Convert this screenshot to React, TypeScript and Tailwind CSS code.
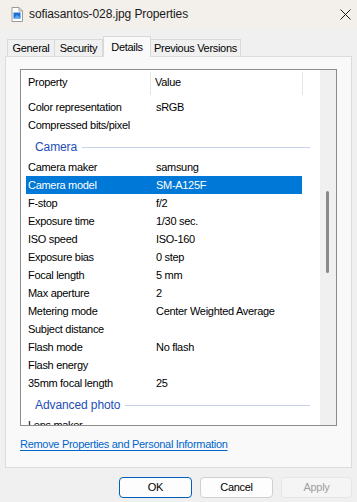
import React from "react";

type Row = { prop?: string; value?: string; group?: string; selected?: boolean };

const rows: Row[] = [
  { prop: "Color representation", value: "sRGB" },
  { prop: "Compressed bits/pixel", value: "" },
  { group: "Camera" },
  { prop: "Camera maker", value: "samsung" },
  { prop: "Camera model", value: "SM-A125F", selected: true },
  { prop: "F-stop", value: "f/2" },
  { prop: "Exposure time", value: "1/30 sec." },
  { prop: "ISO speed", value: "ISO-160" },
  { prop: "Exposure bias", value: "0 step" },
  { prop: "Focal length", value: "5 mm" },
  { prop: "Max aperture", value: "2" },
  { prop: "Metering mode", value: "Center Weighted Average" },
  { prop: "Subject distance", value: "" },
  { prop: "Flash mode", value: "No flash" },
  { prop: "Flash energy", value: "" },
  { prop: "35mm focal length", value: "25" },
  { group: "Advanced photo" },
  { prop: "Lens maker", value: "" },
];

const tabs = [
  { label: "General", w: "w-[48px]" },
  { label: "Security", w: "w-[49px]" },
  { label: "Details", w: "w-[48px]", active: true },
  { label: "Previous Versions", w: "w-[91px]" },
];

const FileIcon = () => (
  <svg width="12" height="15" viewBox="0 0 12 15">
    <path d="M1 0.5H8L11.5 4V14.5H1Z" fill="#ffffff" stroke="#9a9a9a" />
    <path d="M8 0.5V4H11.5" fill="none" stroke="#9a9a9a" />
    <rect x="2.5" y="5.5" width="7" height="6" fill="#1f6fd1" />
    <path d="M2.5 11.5L6 8L9.5 10.5V11.5Z" fill="#5aa7f0" />
  </svg>
);

const CloseIcon = () => (
  <svg width="11" height="11" viewBox="0 0 11 11">
    <path d="M0.5 0.5L10.5 10.5M10.5 0.5L0.5 10.5" stroke="#1a1a1a" strokeWidth="1" />
  </svg>
);

export default function App() {
  return (
    <div className="w-[357px] h-[502px] bg-[#f0f0f0] flex flex-col overflow-hidden font-['Liberation_Sans',Arial,sans-serif] text-[11px] tracking-[-0.3px] text-black">
      {/* title bar */}
      <div className="h-[28px] shrink-0 bg-[#f3f0ec] flex items-center">
        <div className="ml-[11px] flex">
          <FileIcon />
        </div>
        <span className="ml-[6px] text-[12px] tracking-[-0.1px] text-[#1a1a1a]">sofiasantos-028.jpg Properties</span>
        <div className="ml-auto mr-[6px] flex">
          <CloseIcon />
        </div>
      </div>

      {/* tabs */}
      <div className="mt-[8px] -mb-px h-[21px] pl-[7px] flex items-end shrink-0">
        {tabs.map((t) =>
          t.active ? (
            <div
              key={t.label}
              className={`${t.w} relative z-10 h-[21px] flex items-center justify-center bg-[#f9f9f9] border border-b-0 border-[#d9d9d9]`}
            >
              {t.label}
            </div>
          ) : (
            <div
              key={t.label}
              className={`${t.w} h-[18px] flex items-center justify-center bg-[#f0f0f0] border border-[#d9d9d9] -ml-px first:ml-0`}
            >
              {t.label}
            </div>
          )
        )}
      </div>

      {/* panel */}
      <div className="ml-[5px] w-[347px] h-[412px] shrink-0 border border-[#dcdcdc] bg-[#f9f9f9] pt-[12px] pl-[14px]">
        <div className="w-[317px] h-[357px] border border-[#8c8c8c] bg-white flex">
          <div className="flex-1 overflow-hidden">
            {/* header */}
            <div className="h-[28px] pl-[5px] flex items-start">
              <div className="w-[124px] h-[25px] pl-[2px] flex items-center">Property</div>
              <div className="mt-[2px] w-px h-[23px] bg-[#e5e5e5]" />
              <div className="w-[151px] h-[25px] pl-[4px] flex items-center">Value</div>
              <div className="mt-[2px] w-px h-[23px] bg-[#e5e5e5]" />
            </div>
            {rows.map((r, i) =>
              r.group ? (
                <div key={i} className="h-[24px] pl-[14px] pr-[10px] pt-[2px] flex items-center gap-[5px]">
                  <span className="text-[12px] tracking-[-0.1px] text-[#1e4db7]">{r.group}</span>
                  <div className="flex-1 h-px bg-[#c6d1ec]" />
                </div>
              ) : (
                <div key={i} className="h-[18px] pl-[5px] flex">
                  <div
                    className={`w-[276px] flex items-center leading-[18px] ${
                      r.selected ? "bg-[#0078d7] text-white" : ""
                    }`}
                  >
                    <div className="w-[124px] pl-[2px] whitespace-nowrap">{r.prop}</div>
                    <div className="pl-[6px] whitespace-nowrap">{r.value}</div>
                  </div>
                </div>
              )
            )}
          </div>
          {/* scrollbar */}
          <div className="w-[16px] h-full bg-[#f0f0f0] pt-[121px] pl-[6px]">
            <div className="w-[3px] h-[82px] rounded-full bg-[#8a8a8a]" />
          </div>
        </div>
        <div className="mt-[10px] leading-[16px]">
          <span className="text-[#0066cc] underline underline-offset-2">Remove Properties and Personal Information</span>
        </div>
      </div>

      {/* buttons */}
      <div className="mt-[9px] pr-[5px] flex justify-end gap-[8px]">
        <button className="w-[73px] h-[21px] rounded-[4px] border border-[#005fb8] bg-[#fdfdfd] flex items-center justify-center">
          OK
        </button>
        <button className="w-[73px] h-[21px] rounded-[4px] border border-[#d0d0d0] bg-[#fdfdfd] flex items-center justify-center">
          Cancel
        </button>
        <button className="w-[71px] h-[21px] rounded-[4px] border border-[#e5e5e5] bg-[#f5f5f5] text-[#a0a0a0] flex items-center justify-center">
          Apply
        </button>
      </div>
    </div>
  );
}
